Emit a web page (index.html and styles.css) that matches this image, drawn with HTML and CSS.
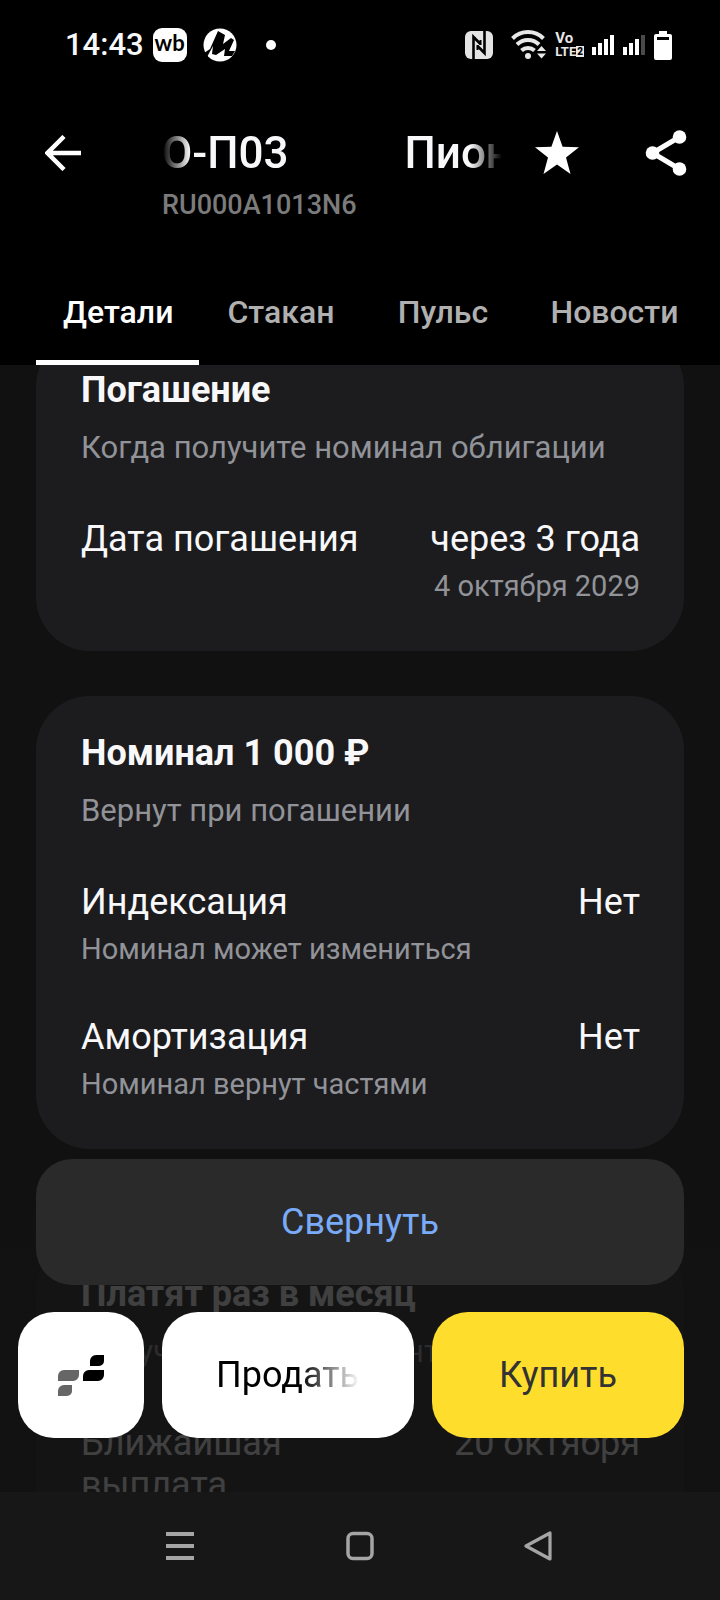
FILE: index.html
```html
<!DOCTYPE html>
<html lang="ru">
<head>
<meta charset="utf-8">
<meta name="viewport" content="width=device-width, initial-scale=1">
<title>Пионер БО-П03</title>
<link rel="stylesheet" href="styles.css">
</head>
<body>
<div class="app">
  <div class="status">
    <div class="status-left">
      <span class="clock">14:43</span>
      <span class="wb">wb</span>
      <svg class="round-logo" viewBox="0 0 34 34" width="34" height="34" aria-hidden="true"><circle cx="17" cy="17" r="16.5" fill="#fff"/><path d="M1 25L7 21 15 3l7 4-2 9 8-6 3 2-5 11h6l-3 5h-8l1-7-9 6-4-1 1-8-6 11-5-1-3 3z" fill="#000"/></svg>
      <span class="dot"></span>
    </div>
    <div class="status-right">
      <svg class="nfc" viewBox="0 0 28 28" width="28" height="28" aria-hidden="true"><rect width="28" height="28" rx="6" fill="#e4e4e4"/><path d="M8.500 28V6L15.500 13M19.500 0v22L12.500 15" fill="none" stroke="#000" stroke-width="2.600"/><path d="M15.500 9v5M12.500 14v5" stroke="#000" stroke-width="2"/></svg>
      <svg class="wifi" viewBox="0 0 36 30" width="36" height="30" aria-hidden="true"><g fill="none" stroke="#e8e8e8" stroke-width="4"><path d="M1.500 8.500a22 22 0 0 1 31 0"/><path d="M6 14.500a15.500 15.500 0 0 1 22 0"/><path d="M10.500 20.500a9.500 9.500 0 0 1 13 0"/></g><circle cx="17" cy="26" r="3" fill="#e8e8e8"/><path d="M26 21l4.500-5 4.500 5zM26 23.500h9l-4.500 5z" fill="#e8e8e8"/></svg>
      <span class="volte"><span class="vo">Vo</span><span class="lte">LTE<b>2</b></span></span>
      <svg class="bars" viewBox="0 0 22 20" width="22" height="20" aria-hidden="true"><path d="M0 12h4v8H0zM6 8h4v12H6zM12 4h4v16h-4zM18 0h4v20h-4z" fill="#fff"/></svg>
      <svg class="bars" viewBox="0 0 22 20" width="22" height="20" aria-hidden="true"><path d="M0 12h4v8H0zM6 8h4v12H6zM12 4h4v16h-4z" fill="#fff"/><path d="M18 0h4v20h-4z" fill="#4a4a4a"/></svg>
      <svg viewBox="0 0 18 29" width="18" height="29" aria-hidden="true"><path d="M5 0h8v3h3a2 2 0 0 1 2 2v22a2 2 0 0 1-2 2H2a2 2 0 0 1-2-2V5a2 2 0 0 1 2-2h3z" fill="#fff"/><path d="M3 6h12v3H3z" fill="#000"/></svg>
    </div>
  </div>

  <header class="header">
    <button class="icon-btn" aria-label="Назад"><svg viewBox="0 0 36 36" width="36" height="36"><path d="M36 18H3M19 1.500L2.500 18 19 34.500" fill="none" stroke="#fff" stroke-width="4.500"/></svg></button>
    <div class="heading">
      <h1 class="marquee"><span>О-П03</span><span>Пионер</span></h1>
      <p class="ticker">RU000A1013N6</p>
    </div>
    <button class="icon-btn" aria-label="В избранное"><svg viewBox="0 0 44 44" width="44" height="44"><path d="M22 0l5.600 15.800L44 16.300 31 26.500 35.500 43 22 33.600 8.500 43 13 26.500 0 16.300l16.400-.5z" fill="#fff"/></svg></button>
    <button class="icon-btn share" aria-label="Поделиться"><svg viewBox="0 0 42 46" width="42" height="46"><path d="M34.500 7L7.500 23l27 16" fill="none" stroke="#fff" stroke-width="5"/><g fill="#fff"><circle cx="34.500" cy="7" r="6.800"/><circle cx="7.500" cy="23" r="6.800"/><circle cx="34.500" cy="39" r="6.800"/></g></svg></button>
  </header>

  <nav class="tabs">
    <a class="tab active" href="#details">Детали</a>
    <a class="tab" href="#book">Стакан</a>
    <a class="tab" href="#pulse">Пульс</a>
    <a class="tab" href="#news">Новости</a>
  </nav>

  <main class="content">
    <div class="cards">
      <section class="card">
        <h2>Погашение</h2>
        <p class="lead">Когда получите номинал облигации</p>
        <div class="row">
          <div class="label">Дата погашения</div>
          <div class="value">через 3 года<small>4 октября 2029</small></div>
        </div>
      </section>
      <section class="card">
        <h2>Номинал 1 000 ₽</h2>
        <p class="lead">Вернут при погашении</p>
        <div class="row">
          <div class="label">Индексация<small>Номинал может измениться</small></div>
          <div class="value">Нет</div>
        </div>
        <div class="row">
          <div class="label">Амортизация<small>Номинал вернут частями</small></div>
          <div class="value">Нет</div>
        </div>
      </section>
      <section class="card coupons">
        <h2>Платят раз в месяц</h2>
        <p class="lead">Получите купон процентом</p>
        <div class="row">
          <div class="label">Ближайшая<br>выплата</div>
          <div class="value">20 октября</div>
        </div>
      </section>
    </div>

    <div class="dock">
      <button class="btn collapse">Свернуть</button>
      <div class="actions">
        <button class="btn square" aria-label="Терминал"><svg viewBox="0 0 46 42" width="46" height="42"><path d="M0 27v-5a6 6 0 0 1 6-6h15v5a6 6 0 0 1-6 6zM0 42v-5a6 6 0 0 1 6-6h8v6a5 5 0 0 1-5 5z" fill="#666"/><path d="M32 12V7a6 6 0 0 1 6-6h8v6a5 5 0 0 1-5 5zM25 27v-5a6 6 0 0 1 6-6h15v5a6 6 0 0 1-6 6z" fill="#000"/></svg></button>
        <button class="btn sell"><span>Продать</span></button>
        <button class="btn buy">Купить</button>
      </div>
    </div>
  </main>

  <div class="sysnav">
    <button class="icon-btn" aria-label="Недавние"><svg viewBox="0 0 28 30" width="28" height="30"><path d="M0 3h28M0 15h28M0 27h28" stroke="#a5a5a5" stroke-width="4"/></svg></button>
    <button class="icon-btn" aria-label="Домой"><svg viewBox="0 0 28 30" width="28" height="30"><rect x="2" y="2.500" width="24" height="25" rx="5" fill="none" stroke="#a5a5a5" stroke-width="3.500"/></svg></button>
    <button class="icon-btn" aria-label="Назад в системе"><svg viewBox="0 0 32 30" width="32" height="30"><path d="M26 2v26L2 15z" fill="none" stroke="#a5a5a5" stroke-width="3.200" stroke-linejoin="round"/></svg></button>
  </div>
</div>
</body>
</html>
```
FILE: styles.css
```css
* { box-sizing: border-box; }

body {
  margin: 0;
  background: #000;
  color: #f8f8fa;
  font-family: Roboto, "Open Sans", sans-serif;
}

h1, h2, p { margin: 0; }

button {
  border: 0;
  padding: 0;
  background: none;
  color: inherit;
  font: inherit;
}

svg { display: block; flex: none; }

.app {
  display: flex;
  flex-direction: column;
  height: 100vh;
}

/* Status bar */
.status {
  display: flex;
  justify-content: space-between;
  align-items: center;
  height: 90px;
  padding: 0 48px 0 65px;
}

.status-left, .status-right {
  display: flex;
  align-items: center;
}

.clock {
  margin-right: 9px;
  font-size: 31px;
  line-height: 36px;
  font-weight: 500;
}

.wb {
  width: 34px;
  height: 34px;
  border-radius: 9px;
  background: #fff;
  color: #000;
  font: 700 22px/30px Lato, sans-serif;
  text-align: center;
}

.round-logo { margin-left: 16px; }

.dot {
  width: 10px;
  height: 10px;
  margin-left: 29px;
  border-radius: 50%;
  background: #fff;
}

.nfc { margin-right: 18px; }
.wifi { margin-right: 8px; }
.bars { margin-right: 8px; }
.bars + svg { margin-left: 1px; }

.volte {
  display: flex;
  flex-direction: column;
  margin-right: 8px;
  color: #e8e8e8;
  font-size: 13px;
  line-height: 13px;
  font-weight: 700;
}

.vo { font-size: 15px; }

.lte { display: flex; align-items: center; }

.lte b {
  padding: 0 1px;
  background: #e8e8e8;
  color: #000;
  font-size: 10px;
  line-height: 11px;
}

/* Title bar */
.header {
  display: grid;
  grid-template-columns: 36px minmax(0, 1fr) 44px 108px;
  height: 171px;
  padding: 36px 33px 0 45px;
}

.icon-btn {
  display: flex;
  align-items: center;
  justify-content: center;
}

.header .icon-btn { height: 54px; }

.header .share {
  width: 42px;
  justify-self: end;
}

.heading { padding: 0 33px 0 81px; }

.marquee {
  display: flex;
  gap: 116px;
  overflow: hidden;
  font-size: 44px;
  line-height: 54px;
  font-weight: 500;
  white-space: nowrap;
  mask-image: linear-gradient(90deg, transparent, #000 28px, #000 calc(100% - 32px), transparent);
}

.ticker {
  margin-top: 9px;
  color: #7b7b7b;
  font-size: 27px;
  line-height: 32px;
  font-weight: 500;
}

/* Tabs */
.tabs {
  display: flex;
  height: 104px;
  padding-left: 36px;
}

.tab {
  min-width: 162px;
  padding: 32px 26px 0 27px;
  border-bottom: 5px solid transparent;
  color: #b0b0b0;
  font-size: 32px;
  line-height: 38px;
  font-weight: 500;
  text-align: center;
  text-decoration: none;
}

.tab.active {
  border-color: #fff;
  color: #fff;
}

/* Cards */
.content {
  position: relative;
  flex: 1;
  min-height: 0;
  overflow: hidden;
  background: #111;
}

.cards {
  display: flex;
  flex-direction: column;
  gap: 45px;
  margin-top: -32px;
  padding: 0 36px;
}

.card {
  padding: 36px 44px 48px 45px;
  border-radius: 54px;
  background: #1c1c1e;
}

.coupons { margin-top: 43px; }

.card h2 {
  font-size: 36px;
  line-height: 42px;
  font-weight: 700;
}

.lead {
  margin: 19px 0 52px;
  color: #919399;
  font-size: 31px;
  line-height: 36px;
}

.row {
  display: flex;
  justify-content: space-between;
  font-size: 36px;
  line-height: 42px;
}

.row + .row { margin-top: 50px; }

.value { text-align: right; }

.row small {
  display: block;
  margin-top: 9px;
  color: #919399;
  font-size: 29px;
  line-height: 34px;
}

/* Floating buttons */
.dock {
  position: absolute;
  right: 0;
  bottom: 0;
  left: 0;
  padding: 0 36px 54px 18px;
  background: linear-gradient(rgba(17, 17, 17, 0) 36px, rgba(18, 18, 18, .8) 100px);
}

.btn {
  height: 126px;
  border-radius: 36px;
  font-size: 36px;
  line-height: 42px;
}

.collapse {
  display: block;
  width: calc(100% - 18px);
  margin-left: 18px;
  background: #2a2a2a;
  color: #7aabf8;
}

.actions {
  display: grid;
  grid-template-columns: 126px 1fr 1fr;
  gap: 18px;
  margin-top: 27px;
}

.square {
  display: flex;
  align-items: center;
  justify-content: center;
  background: #fff;
}

.sell {
  padding: 0 54px;
  background: #fff;
  color: #000;
}

.sell span {
  display: block;
  overflow: hidden;
  white-space: nowrap;
  text-align: left;
  mask-image: linear-gradient(90deg, #000 calc(100% - 60px), transparent);
}

.buy {
  background: #ffdd2d;
  color: #333;
}

/* System navigation */
.sysnav {
  display: grid;
  grid-template-columns: repeat(3, 1fr);
  height: 108px;
  padding: 0 90px;
  background: #171717;
}
```
